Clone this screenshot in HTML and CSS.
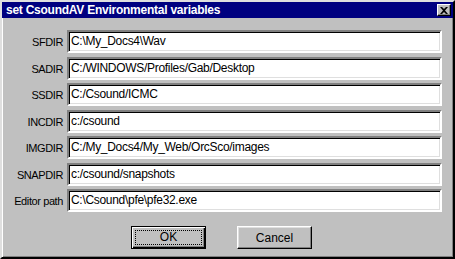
FILE: index.html
```html
<!DOCTYPE html>
<html lang="en">
<head>
    <meta charset="UTF-8">
    <title>set CsoundAV Environmental variables</title>
    <link rel="stylesheet" href="styles.css">
</head>
<body>

<div class="window">
    <div class="titlebar">
        <span class="title">set CsoundAV Environmental variables</span>
        <span class="close-btn">
            <svg width="8" height="7" viewBox="0 0 8 7">
                <path d="M0 0h2l2 2 2-2h2L5 3.5 8 7H6L4 5 2 7H0l3-3.5z" fill="#000"/>
            </svg>
        </span>
    </div>

    <!-- env variables -->
    <div class="form">
        <label class="lbl">SFDIR</label>
        <div class="field">C:\My_Docs4\Wav</div>

        <label class="lbl">SADIR</label>
        <div class="field">C:/WINDOWS/Profiles/Gab/Desktop</div>

        <label class="lbl">SSDIR</label>
        <div class="field">C:/Csound/ICMC</div>

        <label class="lbl">INCDIR</label>
        <div class="field">c:/csound</div>

        <label class="lbl">IMGDIR</label>
        <div class="field">C:/My_Docs4/My_Web/OrcSco/images</div>

        <label class="lbl">SNAPDIR</label>
        <div class="field">c:/csound/snapshots</div>

        <label class="lbl">Editor path</label>
        <div class="field">C:\Csound\pfe\pfe32.exe</div>
    </div>

    <div class="buttons">
        <button class="btn btn-default"><span class="focus">OK</span></button>
        <button class="btn">Cancel</button>
    </div>
</div>

</body>
</html>
```

FILE: styles.css
```css
body {
    margin: 0;
    padding: 0;
    background-color: #c0c0c0;
    font-family: 'Liberation Sans', Arial, sans-serif;
}

.window {
    width: 455px;
    height: 259px;
    box-sizing: border-box;
    background-color: #c0c0c0;
    border: 2px solid;
    border-color: #dfdfdf #000 #000 #dfdfdf;
    box-shadow: inset 1px 1px #fff, inset -1px -1px #808080;
    display: flex;
    flex-direction: column;
}

.titlebar {
    height: 16px;
    background-color: #000080;
    color: #fff;
    display: flex;
    align-items: center;
    justify-content: space-between;
    padding: 0 2px 0 4px;
}

.title {
    font-weight: bold;
    font-size: 12px;
    letter-spacing: -0.25px;
}

.close-btn {
    width: 14px;
    height: 12px;
    box-sizing: border-box;
    background-color: #c0c0c0;
    border: 1px solid;
    border-color: #fff #000 #000 #fff;
    box-shadow: inset -1px -1px #808080;
    display: flex;
    align-items: center;
    justify-content: center;
}

.form {
    display: grid;
    grid-template-columns: 61px 375px;
    column-gap: 4px;
    row-gap: 2.5px;
    margin-top: 12px;
}

.lbl {
    text-align: right;
    font-size: 11px;
    letter-spacing: -0.4px;
    color: #000;
    line-height: 24px;
}

.field {
    height: 23px;
    box-sizing: border-box;
    background-color: #fff;
    border: 2px solid;
    border-color: #808080 #fff #fff #808080;
    box-shadow: inset 1px 1px #000, inset -1px -1px #dfdfdf;
    padding: 0 2px;
    font-size: 12px;
    letter-spacing: -0.3px;
    line-height: 19px;
    color: #000;
    white-space: nowrap;
    overflow: hidden;
}

.buttons {
    display: flex;
    gap: 31px;
    margin-top: 13px;
    padding-left: 129px;
}

.btn {
    width: 75px;
    height: 23px;
    box-sizing: border-box;
    margin: 0;
    padding: 0;
    background-color: #c0c0c0;
    border: 1px solid;
    border-color: #fff #000 #000 #fff;
    box-shadow: inset -1px -1px #808080, inset 1px 1px #dfdfdf;
    font-family: 'Liberation Sans', Arial, sans-serif;
    font-size: 12px;
    color: #000;
}

.btn-default {
    border: 1px solid #000;
    box-shadow: inset 1px 1px #fff, inset -1px -1px #000, inset -2px -2px #808080;
    padding: 3px;
}

.focus {
    display: block;
    height: 100%;
    box-sizing: border-box;
    border: 1px dotted #000;
    line-height: 13px;
}
```
